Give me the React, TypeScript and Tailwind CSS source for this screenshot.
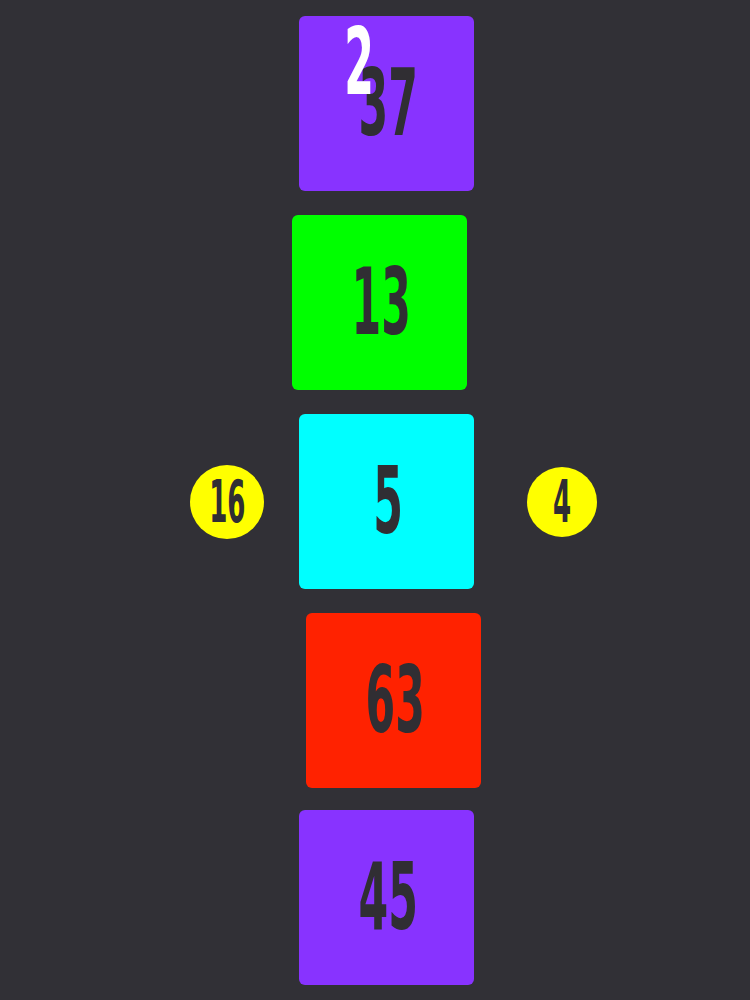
const font = { fontFamily: '"DejaVu Sans Condensed", "DejaVu Sans", sans-serif' }

function Num({ value, big = true, className = '' }: { value: string; big?: boolean; className?: string }) {
  return (
    <span
      style={font}
      className={`inline-block font-bold leading-none origin-center ${
        big ? 'text-[93px] scale-x-[0.51]' : 'text-[58px] scale-x-[0.5]'
      } ${className}`}
    >
      {value}
    </span>
  )
}

function Tile({ value, color, className = '', children }: { value: string; color: string; className?: string; children?: React.ReactNode }) {
  return (
    <div className={`relative w-[175px] h-[175px] rounded-[6px] flex items-center justify-center text-[#302e33] ${color} ${className}`}>
      <Num value={value} className="translate-x-[2px]" />
      {children}
    </div>
  )
}

function Coin({ value, size }: { value: string; size: string }) {
  return (
    <div className={`${size} rounded-full bg-[#ffff00] flex items-center justify-center text-[#302e33]`}>
      <Num value={value} big={false} />
    </div>
  )
}

export default function App() {
  return (
    <div className="w-[750px] h-[1000px] bg-[#313036] overflow-hidden pt-4 pl-[190px]">
      <div className="flex flex-col">
        <Tile value="37" color="bg-[#8833ff]" className="ml-[109px]">
          <div className="absolute left-[31px] top-0 text-white">
            <Num value="2" />
          </div>
        </Tile>

        <Tile value="13" color="bg-[#00ff00]" className="ml-[102px] mt-6" />

        <div className="flex items-center mt-6">
          <Coin value="16" size="w-[74px] h-[74px]" />
          <Tile value="5" color="bg-[#00ffff]" className="ml-[35px]" />
          <div className="ml-[53px]">
            <Coin value="4" size="w-[70px] h-[70px]" />
          </div>
        </div>

        <Tile value="63" color="bg-[#ff2200]" className="ml-[116px] mt-6" />

        <Tile value="45" color="bg-[#8833ff]" className="ml-[109px] mt-[22px]" />
      </div>
    </div>
  )
}
